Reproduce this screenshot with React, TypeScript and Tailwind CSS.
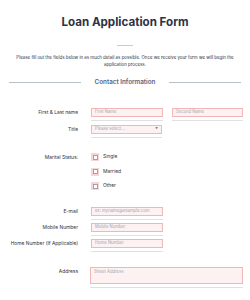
const font = { fontFamily: "Inter, 'Liberation Sans', sans-serif" };

function Field({ placeholder, width = "w-[72px]", select = false }: { placeholder: string; width?: string; select?: boolean }) {
    return (
        <div className={width}>
            <div className="flex h-[9px] items-center justify-between border border-[#f3b6b6] bg-[#fdf1f1] px-[3px] text-[4.2px] text-[#a3a8b5]">
                <span>{placeholder}</span>
                {select && <span className="text-[3px] text-[#7d8494]">▼</span>}
            </div>
            <div className="mt-[3px] h-px bg-[#dfe1e6]" />
        </div>
    );
}

function Row({ label, children, className = "" }: { label: string; children: React.ReactNode; className?: string }) {
    return (
        <div className={`grid grid-cols-[78px_1fr] gap-x-[13px] ${className}`}>
            <div className="pt-[2px] text-right text-[4.9px] leading-[5px] text-[#2c3345]">{label}</div>
            <div className="flex gap-[9px]">{children}</div>
        </div>
    );
}

function Check({ label }: { label: string }) {
    return (
        <div className="flex h-[8px] items-center gap-[4px]">
            <div className="flex h-[8px] w-[8px] items-center justify-center bg-[#f8d4d4]">
                <div className="h-[5px] w-[5px] border border-[#9ea3ae] bg-white" />
            </div>
            <span className="text-[4.9px] text-[#2c3345]">{label}</span>
        </div>
    );
}

export default function App() {
    return (
        <div className="h-[300px] w-[250px] overflow-hidden bg-white" style={font}>
            <h1 className="mt-[15px] text-center text-[11.6px] font-bold leading-[14px] text-[#2c3345]">Loan Application Form</h1>
            <div className="mx-auto mt-[16px] h-px w-[16px] bg-[#c3cad8]" />
            <p className="mx-auto mt-[8px] w-[225px] text-center text-[4.4px] leading-[7px] text-[#2c3345]">
                Please fill out the fields below in as much detail as possible. Once we receive your form we will begin the application process.
            </p>
            <div className="mt-[10px] flex items-center gap-[14px] px-[9px]">
                <div className="h-px flex-1 bg-[#b9bfca]" />
                <span className="text-[6.3px] font-semibold leading-[8px] text-[#57647e]">Contact Information</span>
                <div className="h-px flex-1 bg-[#b9bfca]" />
            </div>

            <Row label="First & Last name" className="mt-[22px]">
                <Field placeholder="First Name" />
                <Field placeholder="Second Name" width="w-[71px]" />
            </Row>
            <Row label="Title" className="mt-[4px]">
                <Field placeholder="Please select..." width="w-[71px]" select />
            </Row>

            <Row label="Marital Status:" className="mt-[15px]">
                <div className="flex flex-col gap-[6.5px]">
                    <Check label="Single" />
                    <Check label="Married" />
                    <Check label="Other" />
                </div>
            </Row>

            <Row label="E-mail" className="mt-[17px]">
                <Field placeholder="ex: myname@example.com" />
            </Row>
            <Row label="Mobile Number" className="mt-[3px]">
                <Field placeholder="Mobile Number" />
            </Row>
            <Row label="Home Number (If Applicable)" className="mt-[3px]">
                <Field placeholder="Home Number" />
            </Row>

            <div className="mt-[15px] grid grid-cols-[78px_1fr] gap-x-[12px] pr-[7px]">
                <div className="pt-[2px] text-right text-[4.9px] leading-[5px] text-[#2c3345]">Address</div>
                <div>
                    <div className="h-[17px] border border-[#f3b6b6] bg-[#fdf1f1] px-[3px] pt-[1px] text-[4.2px] text-[#a3a8b5]">Street Address</div>
                    <div className="mt-[3px] h-px bg-[#dfe1e6]" />
                </div>
            </div>
        </div>
    );
}
